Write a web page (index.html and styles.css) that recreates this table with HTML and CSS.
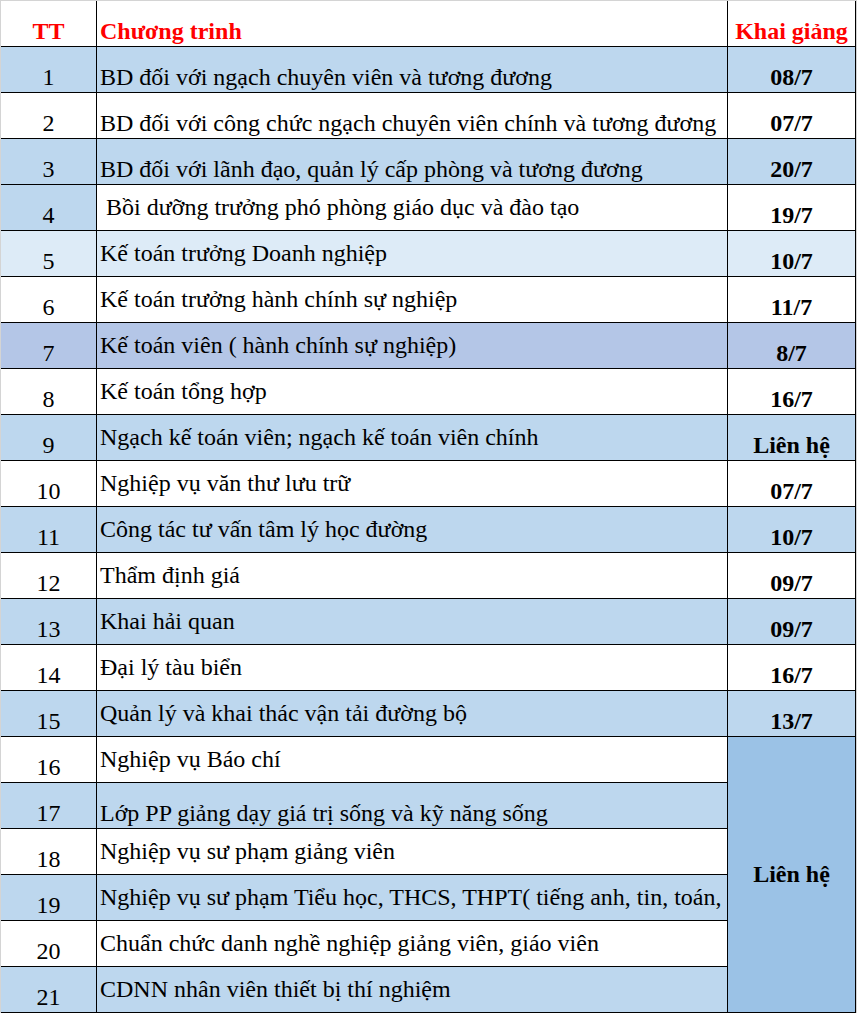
FILE: index.html
```html
<!DOCTYPE html>
<html lang="vi">
<head>
<meta charset="utf-8">
<link rel="stylesheet" href="styles.css">
</head>
<body>
<div class="sheet">
  <div class="c tt head">TT</div>
  <div class="c prog head">Chương trinh</div>
  <div class="c date head">Khai giảng</div>

  <div class="c tt blue">1</div>
  <div class="c prog blue bot">BD đối với ngạch chuyên viên và tương đương</div>
  <div class="c date blue">08/7</div>

  <div class="c tt">2</div>
  <div class="c prog bot">BD đối với công chức ngạch chuyên viên chính và tương đương</div>
  <div class="c date">07/7</div>

  <div class="c tt blue">3</div>
  <div class="c prog blue bot">BD đối với lãnh đạo, quản lý cấp phòng và tương đương</div>
  <div class="c date blue">20/7</div>

  <div class="c tt blue">4</div>
  <div class="c prog mid"> Bồi dưỡng trưởng phó phòng giáo dục và đào tạo</div>
  <div class="c date">19/7</div>

  <div class="c tt pale">5</div>
  <div class="c prog pale mid">Kế toán trưởng Doanh nghiệp</div>
  <div class="c date pale">10/7</div>

  <div class="c tt">6</div>
  <div class="c prog mid">Kế toán trưởng hành chính sự nghiệp</div>
  <div class="c date">11/7</div>

  <div class="c tt slate">7</div>
  <div class="c prog slate mid">Kế toán viên ( hành chính sự nghiệp)</div>
  <div class="c date slate">8/7</div>

  <div class="c tt">8</div>
  <div class="c prog mid">Kế toán tổng hợp</div>
  <div class="c date">16/7</div>

  <div class="c tt blue">9</div>
  <div class="c prog blue mid">Ngạch kế toán viên; ngạch kế toán viên chính</div>
  <div class="c date blue">Liên hệ</div>

  <div class="c tt">10</div>
  <div class="c prog mid">Nghiệp vụ văn thư lưu trữ</div>
  <div class="c date">07/7</div>

  <div class="c tt blue">11</div>
  <div class="c prog blue mid">Công tác tư vấn tâm lý học đường</div>
  <div class="c date blue">10/7</div>

  <div class="c tt">12</div>
  <div class="c prog mid">Thẩm định giá</div>
  <div class="c date">09/7</div>

  <div class="c tt blue">13</div>
  <div class="c prog blue mid">Khai hải quan</div>
  <div class="c date blue">09/7</div>

  <div class="c tt">14</div>
  <div class="c prog mid">Đại lý tàu biển</div>
  <div class="c date">16/7</div>

  <div class="c tt blue">15</div>
  <div class="c prog blue mid">Quản lý và khai thác vận tải đường bộ</div>
  <div class="c date blue">13/7</div>

  <div class="c tt">16</div>
  <div class="c prog mid">Nghiệp vụ Báo chí</div>
  <div class="c date merged">Liên hệ</div>

  <div class="c tt blue">17</div>
  <div class="c prog blue bot">Lớp PP giảng dạy giá trị sống và kỹ năng sống</div>

  <div class="c tt">18</div>
  <div class="c prog mid">Nghiệp vụ sư phạm giảng viên</div>

  <div class="c tt blue">19</div>
  <div class="c prog blue mid">Nghiệp vụ sư phạm Tiểu học, THCS, THPT( tiếng anh, tin, toán, ...)</div>

  <div class="c tt">20</div>
  <div class="c prog mid">Chuẩn chức danh nghề nghiệp giảng viên, giáo viên</div>

  <div class="c tt blue">21</div>
  <div class="c prog blue mid">CDNN nhân viên thiết bị thí nghiệm</div>
</div>
</body>
</html>
```

FILE: styles.css
```css
html, body {
  margin: 0;
  padding: 0;
  background: #ffffff;
}

.sheet {
  display: grid;
  grid-template-columns: 96px 631px 128px;
  grid-auto-rows: 46px;
  width: 855px;
  border-top: 1px solid #d4d4d4;
  border-left: 1px solid #d4d4d4;
  border-right: 1px solid #d4d4d4;
  font-family: "Liberation Serif", "Times New Roman", serif;
  font-size: 24px;
  line-height: 27px;
  color: #000;
}

.c {
  box-sizing: border-box;
  border-right: 1px solid #000;
  border-bottom: 1px solid #000;
  display: flex;
  align-items: flex-end;
  padding-bottom: 1px;
  overflow: hidden;
  white-space: pre;
  background: #ffffff;
}

.tt {
  justify-content: center;
}

.prog {
  padding-left: 3px;
}

.prog.mid {
  align-items: center;
  padding-bottom: 0;
}

.date {
  justify-content: center;
  font-weight: bold;
}

.head {
  color: #ff0000;
  font-weight: bold;
}

.blue {
  background: #bdd7ee;
}

.pale {
  background: #ddebf7;
}

.slate {
  background: #b4c6e7;
}

.merged {
  grid-row: span 6;
  background: #9bc2e6;
  align-items: center;
  padding-bottom: 0;
}
```
